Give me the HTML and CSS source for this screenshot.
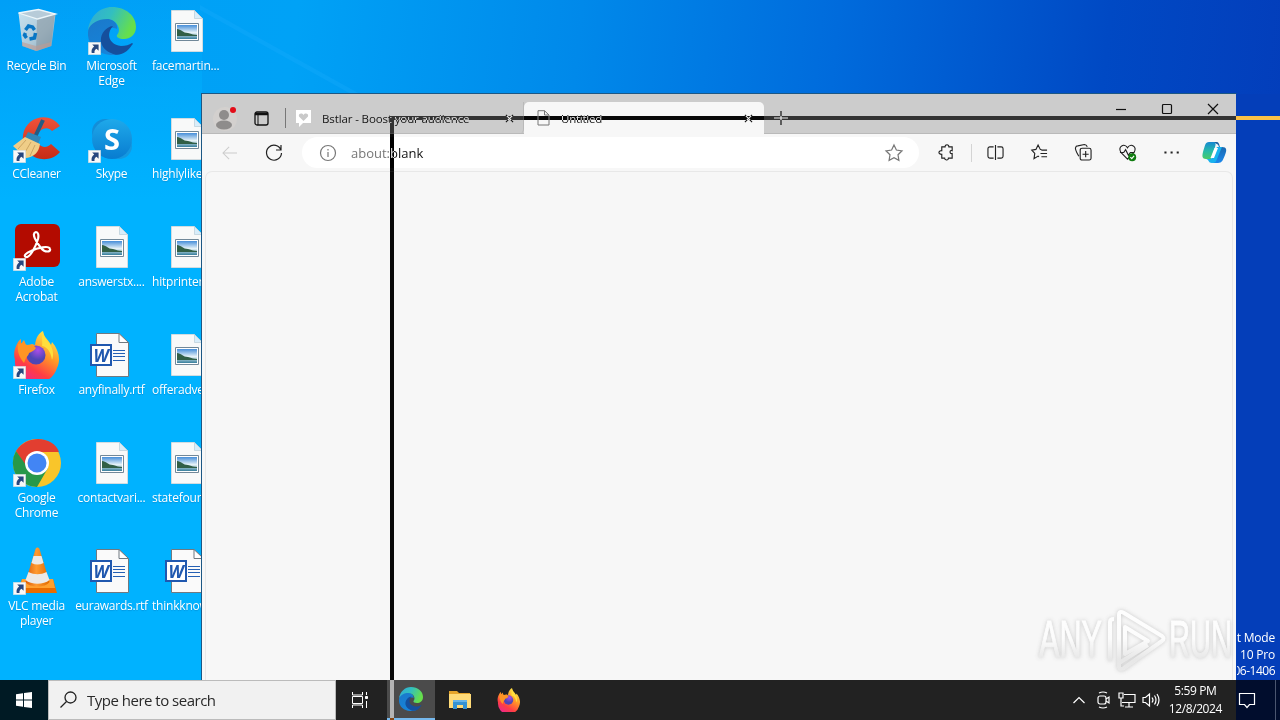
FILE: index.html
```
<!DOCTYPE html>
<html lang="en">
<head>
<meta charset="utf-8">
<title>Desktop</title>
<link rel="stylesheet" href="styles.css">
</head>
<body>
<svg class="defs" width="0" height="0" aria-hidden="true">
  <defs>
    <linearGradient id="edgeTop" x1="0" y1="0" x2="1" y2=".35"><stop offset="0" stop-color="#31a9d8"/><stop offset=".5" stop-color="#32bfc0"/><stop offset="1" stop-color="#66df4b"/></linearGradient>
    <linearGradient id="edgeMid" x1="0" y1="0" x2=".4" y2="1"><stop offset="0" stop-color="#1b78c9"/><stop offset="1" stop-color="#1684da"/></linearGradient>
    <linearGradient id="foxBody" x1=".8" y1="0" x2=".25" y2="1"><stop offset="0" stop-color="#fff14f"/><stop offset=".4" stop-color="#ff9827"/><stop offset=".72" stop-color="#ff3d45"/><stop offset="1" stop-color="#ea2594"/></linearGradient>
    <radialGradient id="foxCore" cx=".6" cy=".25"><stop offset="0" stop-color="#ac4de8"/><stop offset="1" stop-color="#4f46b5"/></radialGradient>
    <linearGradient id="skyBlue" x1="0" y1="0" x2="0" y2="1"><stop offset="0" stop-color="#1fa9ea"/><stop offset="1" stop-color="#087cd0"/></linearGradient>
    <linearGradient id="photo" x1="0" y1="0" x2="0" y2="1"><stop offset="0" stop-color="#468ed9"/><stop offset=".55" stop-color="#e9f4f8"/><stop offset="1" stop-color="#347d9b"/></linearGradient>
    <linearGradient id="cone" x1="0" y1="0" x2="1" y2="0"><stop offset="0" stop-color="#d95a08"/><stop offset=".45" stop-color="#ff9a30"/><stop offset="1" stop-color="#e06a00"/></linearGradient>
    <linearGradient id="copA" x1="0" y1="0" x2="0" y2="1"><stop offset="0" stop-color="#1688d1"/><stop offset=".55" stop-color="#28bca7"/><stop offset="1" stop-color="#49cb68"/></linearGradient>
    <linearGradient id="copB" x1="0" y1="0" x2="0" y2="1"><stop offset="0" stop-color="#1b5f9d"/><stop offset="1" stop-color="#1b88ed"/></linearGradient>
    <linearGradient id="bin" x1="0" y1="0" x2="1" y2="1"><stop offset="0" stop-color="#dce8ee"/><stop offset=".6" stop-color="#bfcbd3"/><stop offset="1" stop-color="#8fa0ad"/></linearGradient>
    <linearGradient id="ccRed" x1="0" y1="0" x2="0" y2="1"><stop offset="0" stop-color="#f0523a"/><stop offset="1" stop-color="#c52b16"/></linearGradient>
    <linearGradient id="markFill" x1="0" y1="0" x2="0" y2="68" gradientUnits="userSpaceOnUse"><stop offset="0" stop-color="#fff"/><stop offset=".45" stop-color="#fdfdfd"/><stop offset=".75" stop-color="#e6e6e6"/><stop offset="1" stop-color="#e9e9e9"/></linearGradient>
    <symbol id="shortcut" viewBox="0 0 13 13"><path fill="#f8f8f8" stroke="#cfd6dc" stroke-width=".6" d="M.3.3h12.400v12.400H.3z"/><path fill="#27477f" d="M4.200 2.400h6.400v6.300L8.500 6.800c-1.700 1-2.200 2.200-2 4.200H3.700c-.6-3 .3-5 2.500-6.500z"/></symbol>
    <symbol id="edge" viewBox="0 0 48 48"><path fill="url(#edgeMid)" d="M0 25C1 12 11 10 18 11c8 1 12 6 11 11-1-1-3-1-5-1-8 1-9 11-3 18 4 5 9 8 14 7-5 2-9 2-13 2C9 47-1 38 0 25Z"/><path fill="#154f9d" d="M13 35c-1-7 4-15 12-16-8 9-3 19 8 20 5 0 8-1 11-3 1 0 1 1 0 2C38 47 30 50 23 46c-5-2-9-6-10-11Z"/><path fill="url(#edgeTop)" d="M0 23C2 9 12 0 24 0c14 0 24 9 24 20 0 8-6 12-12 12-5 0-8-2-7-4 5-5 0-16-10-16C10 12 3 16 0 23Z"/></symbol>
    <symbol id="firefox" viewBox="0 0 48 48"><path fill="url(#foxBody)" d="M4 13c1-2 2-4 4-5v5l3-4 2 5c2 0 4 0 6-1l3 1c1-8 4-12 8-14 1 7 6 9 8 14l1-3c7 8 9 18 5 26A21.500 21.500 0 0 1 2 29C0 22 2 17 4 13Z"/><circle cx="23" cy="24" r="9.500" fill="url(#foxCore)"/><path fill="#ff9524" d="M5 13c4-1 6-1 9 1 5-1 7 0 9 3-2 3-5 4-7 5 0 2-2 3-3 5l-2 5C6 26 4 20 5 13Z"/><path fill="#ffdf3c" d="M30 1c1 7 6 9 8 14 2 4 3 9 1 14-1-7-4-13-10-14 1-4-1-8 1-14Z"/></symbol>
    <symbol id="photoFile" viewBox="0 0 32 42"><path fill="#f8f9f9" stroke="#d1dce1" d="M.5.5h23l8 8v33H.500z"/><path fill="#d8edfa" stroke="#b9ccd7" stroke-width=".7" d="M23.500.5v8h8z"/><path fill="#fff" stroke="#718899" d="M4.500 13.500h23v17h-23z"/><path fill="url(#photo)" d="M6 15h20v14H6z"/><path fill="#315f46" d="M6 19c4 0 6 4 11 4 4 1 6 2 9 2v1H6z"/></symbol>
    <symbol id="wordFile" viewBox="0 0 40 44"><path fill="#fafafa" stroke="#707980" d="M6.500.5H29l9.500 9v34h-32z"/><path fill="#fff" stroke="#707980" d="M29 .5v9h9.500z"/><path stroke="#2560b4" stroke-width="1.200" d="M23 17.500h12M23 20.500h12M23 23.500h12M23 27.500h12"/><path fill="#fff" stroke="#2058af" stroke-width="2" d="M1 12h20v20H1z"/><text x="11" y="28.500" text-anchor="middle" class="word-letter">W</text></symbol>
  </defs>
</svg>
<main class="desktop">
  <svg class="wallpaper" width="1280" height="720" viewBox="0 0 1280 720"><path fill="#23b0ff" opacity=".22" d="M200 5l160 89h-9L200 10z"/></svg>
  <div class="icons">
    <div class="icon"><svg class="art" viewBox="0 0 48 48"><path fill="url(#bin)" d="M5.500 6l4 33 14 5 15-5 4-32-18 4z" opacity=".9"/><path fill="#8997a2" d="M24 12l-1 32 15-5 4-32z" opacity=".6"/><path fill="#b7cbd8" stroke="#edf6fa" stroke-width="1.300" d="M5.500 6l20-3.500 17 4.500-18 5z"/><path fill="#bf9b91" opacity=".6" d="M9 35l14 4 15-4v4l-15 5-14-5z"/><path fill="none" stroke="#0876c4" stroke-width="3.500" d="M12.500 23l3-4 4 1 2 3M22.500 26l-1 5-5 1M13.500 31l-2-3 1-2"/></svg><span class="label">Recycle Bin</span></div>
    <div class="icon"><svg class="art"><use href="#edge"/></svg><svg class="arrow"><use href="#shortcut"/></svg><span class="label">Microsoft<br>Edge</span></div>
    <div class="icon"><svg class="file"><use href="#photoFile"/></svg><span class="label left">facemartin...</span></div>
    <div class="icon"><svg class="art" viewBox="0 0 48 48"><path fill="url(#ccRed)" d="M47 11C37-4 13 1 10 20c-3 22 24 32 37 17l-9-8c-6 6-14 2-14-6s10-13 15-7z"/><path stroke="#245c84" stroke-width="4" d="M30 5L22 22"/><path fill="#3287b7" d="M15 17l13 5-3 7-13-6z"/><path fill="#efcd87" d="M12 22l15 7c-1 8-6 13-14 14L0 31z"/><path stroke="#c19b59" stroke-width=".8" d="M13 25L5 34M18 27l-7 12M22 30l-5 11"/></svg><svg class="arrow"><use href="#shortcut"/></svg><span class="label">CCleaner</span></div>
    <div class="icon"><svg class="art" viewBox="0 0 48 48"><circle cx="17" cy="17" r="13" fill="#138ed8"/><circle cx="31" cy="31" r="13" fill="#1598df"/><circle cx="24" cy="24" r="20" fill="url(#skyBlue)"/><text x="24" y="34.500" text-anchor="middle" class="skype-letter">S</text></svg><svg class="arrow"><use href="#shortcut"/></svg><span class="label">Skype</span></div>
    <div class="icon"><svg class="file"><use href="#photoFile"/></svg><span class="label left">highlylike...</span></div>
    <div class="icon"><svg class="art" viewBox="0 0 48 48"><rect x="2" y="1" width="45" height="43" rx="6" fill="#b30b00"/><path fill="none" stroke="#fff" stroke-width="2.200" d="M23 9c-5 1 0 10 5 16 4 5 10 4 9 1-1-4-13-1-19 2-5 2-8 5-5 6 4 1 10-11 12-18 1-4 0-7-2-7Z"/></svg><svg class="arrow"><use href="#shortcut"/></svg><span class="label">Adobe<br>Acrobat</span></div>
    <div class="icon"><svg class="file"><use href="#photoFile"/></svg><span class="label">answerstx....</span></div>
    <div class="icon"><svg class="file"><use href="#photoFile"/></svg><span class="label left">hitprinter...</span></div>
    <div class="icon"><svg class="art"><use href="#firefox"/></svg><svg class="arrow"><use href="#shortcut"/></svg><span class="label">Firefox</span></div>
    <div class="icon"><svg class="word"><use href="#wordFile"/></svg><span class="label">anyfinally.rtf</span></div>
    <div class="icon"><svg class="file"><use href="#photoFile"/></svg><span class="label left">offeradve...</span></div>
    <div class="icon"><svg class="art" viewBox="0 0 48 48"><circle cx="24" cy="24" r="24" fill="#f9c52a"/><path fill="#e23e30" d="M3 12C15-6 41-2 46 13H24L14 30z"/><path fill="#279849" d="M3 12a24 24 0 0 0 21 36l11-19-20 0z"/><circle cx="24" cy="24" r="12" fill="#fff"/><circle cx="24" cy="24" r="9.500" fill="#4285f4"/></svg><svg class="arrow"><use href="#shortcut"/></svg><span class="label">Google<br>Chrome</span></div>
    <div class="icon"><svg class="file"><use href="#photoFile"/></svg><span class="label">contactvari...</span></div>
    <div class="icon"><svg class="file"><use href="#photoFile"/></svg><span class="label left">statefour...</span></div>
    <div class="icon"><svg class="art" viewBox="0 0 48 48"><path fill="#e96c00" d="M9 32h31l4 14H4z"/><path fill="#ffa02e" d="M9 32h31l2 9H7z"/><path fill="url(#cone)" d="M22.500 2c1-2 3-2 4 0l10 33c-4 6-20 6-24 0z"/><path fill="#ece9e6" d="M20.500 9h8l2 7c-4 2-8 2-12 0zM15.500 25c6 3 12 3 18 0l3 8c-6 5-18 5-24 0z"/></svg><svg class="arrow"><use href="#shortcut"/></svg><span class="label">VLC media<br>player</span></div>
    <div class="icon"><svg class="word"><use href="#wordFile"/></svg><span class="label">eurawards.rtf</span></div>
    <div class="icon"><svg class="word"><use href="#wordFile"/></svg><span class="label left">thinkknow...</span></div>
  </div>
  <div class="system-mark"><span>t Mode</span><span>s 10 Pro</span><span>06-1406</span></div>

  <section class="window">
    <header class="tabs">
      <svg class="avatar" viewBox="0 0 26 26"><circle cx="13" cy="14" r="12" fill="#d3d0ce"/><circle cx="12" cy="10" r="5" fill="#8e8c8b"/><ellipse cx="12" cy="20" rx="8" ry="4.500" fill="#8e8c8b"/><circle cx="21" cy="5" r="3" fill="#e30c18"/></svg>
      <svg class="tab-menu" viewBox="0 0 15 15"><rect x="1" y="1" width="13" height="13" rx="2" fill="none" stroke="#111" stroke-width="1.300"/><path stroke="#111" stroke-width="2.500" d="M1 3h13"/><path stroke="#111" d="M4 4v10"/></svg>
      <i class="tab-rule"></i>
      <div class="tab first"><svg class="heart" viewBox="0 0 17 17"><path fill="#fff" d="M1 0h15v13H8l-4 4v-4H1z"/><path fill="#c9c9c9" d="M8.500 11L4 6.500c-1-3 3-4 4.500-1.500C10 2.500 14 3.500 13 6.500z"/></svg><span>Bstlar - Boost your audience</span><svg class="close" viewBox="0 0 10 10"><path d="M1 1l8 8M9 1L1 9"/></svg></div>
      <div class="tab active"><svg class="page-icon" viewBox="0 0 13 16"><path d="M1 .7h6.500L12 5v10H1zM7.500.7V5H12"/></svg><span>Untitled</span><svg class="close" viewBox="0 0 10 10"><path d="M1 1l8 8M9 1L1 9"/></svg></div>
      <svg class="new-tab" viewBox="0 0 14 14"><path d="M0 7h14M7 0v14"/></svg>
      <div class="window-buttons"><svg viewBox="0 0 12 12"><path d="M1 6.500h10"/></svg><svg viewBox="0 0 12 12"><rect x="1.500" y="1.500" width="9" height="9" rx="1"/></svg><svg viewBox="0 0 12 12"><path d="M1 1l10 10M11 1L1 11"/></svg></div>
    </header>
    <div class="toolbar">
      <svg class="back" viewBox="0 0 18 16"><path d="M17 8H1M8 1L1 8l7 7"/></svg>
      <svg class="reload" viewBox="0 0 18 18"><path d="M16 6A7.500 7.500 0 1 0 16.500 9M16 1v5h-5"/></svg>
      <div class="address"><svg class="info" viewBox="0 0 18 18"><circle cx="9" cy="9" r="7.500"/><path d="M9 8v5M9 5v1.500"/></svg><span><em>about:</em>blank</span><svg class="star" viewBox="0 0 18 18"><path d="M9 1l2.400 5 5.600.8-4 3.900.9 5.600L9 13.700l-4.900 2.600.9-5.600-4-3.900L6.600 6z"/></svg></div>
      <div class="tools">
        <svg viewBox="0 0 18 18"><path d="M5 3h2.500c0-3 4-3 4 0H15v4c-3-1-3 4 0 3v5h-4c0 3-4 2-4 0H4v-4c-4 0-4-4 0-4V3z"/></svg>
        <i></i>
        <svg viewBox="0 0 18 18"><path d="M7 3H3a2 2 0 0 0-2 2v8q0 2 2 2h4M11 3h4q2 0 2 2v8q0 2-2 2h-4M9 1v16"/></svg>
        <svg viewBox="0 0 18 18"><path d="M11 6l-1.200-.3L7.500 1 5.200 5.700.8 6.500 4 10l-.8 5.500 4.300-2.700 1 .6M11 6.500h6M10 10h7M11 13.500h6"/></svg>
        <svg viewBox="0 0 18 18"><path d="M4 13C3 11 0 6 .5 4Q1 2 3 2l7-1.500Q12 .5 13 3M5.500 6.500q0-2 2-2H15q2 0 2 2V15q0 2-2 2H7.500q-2 0-2-2zM11.300 7.500v6.500M8 10.800h6.500"/></svg>
        <svg viewBox="0 0 18 18"><path d="M9 16L2 9C-2 2 6-1 9 4c3-5 11-2 7 5zM1 9h4l2-3 3 6 2-3h4"/><circle cx="14" cy="14" r="4.200" fill="#107c10" stroke="none"/><path stroke="#fff" d="M12 14l1.500 1.500 2.500-3"/></svg>
        <svg viewBox="0 0 18 18"><path class="dots" d="M1.500 9h2.200M8 9h2.200M14.500 9h2.200"/></svg>
        <svg class="copilot" viewBox="0 0 24 24"><path fill="url(#copB)" d="M8 1h6c3 0 3 2 4 5h2c5 0 5 3 3 8s-3 8-7 8h-6c3-1 3-3 4-6l3-9c0-4-3-5-9-6z"/><path fill="url(#copA)" d="M7 1h4c3 0 3 2 2 5L9 18H4c-4 0-4-3-3-7 2-6 2-10 6-10z"/><path fill="#18b2ee" d="M4 18h5l6-12h5l-5 12c-1 3-2 4-5 4-4 0-3-4-6-4z"/><path fill="#fff" d="M12.500 7h3.500l-4 10H8.500z"/></svg>
      </div>
    </div>
    <div class="page"></div>
  </section>

  <svg class="watermark" width="200" height="68" viewBox="0 0 200 68"><g><text x="2" y="49" textLength="63" lengthAdjust="spacingAndGlyphs">ANY</text><path d="M73 53V14q0-3 4-3M82 60V7q0-5 5-2l38 23q3 3 0 5L87 60q-5 3-5-2M88 46V19l23 14zM82 55l29-18"/><text x="132" y="49" textLength="63" lengthAdjust="spacingAndGlyphs">RUN</text></g></svg>

  <footer class="taskbar">
    <div class="start"><svg width="16" height="16" viewBox="0 0 16 16"><path fill="#fff" d="M0 2.300L7 1.200v6.300H0zM8 1l8-1v7.500H8zM0 8.500h7v6.300l-7-1zM8 8.500h8V16l-8-1z"/></svg></div>
    <div class="search"><svg width="18" height="18" viewBox="0 0 18 18"><circle cx="10.500" cy="6.500" r="5.500"/><path d="M6.500 10.500l-6 6"/></svg><span>Type here to search</span></div>
    <div class="task view"><svg width="18" height="18" viewBox="0 0 18 18"><path d="M1.500 1v3h10V1M1.500 17v-3h10v3M1.500 5.500h10v7h-10zM15.500 1v3M15.500 10v7"/><path fill="#fff" d="M14.500 5.500h2v2h-2z"/></svg></div>
    <div class="task selected"><svg width="24" height="24"><use href="#edge"/></svg></div>
    <div class="task"><svg width="22" height="20" viewBox="0 0 22 20"><path fill="#e6a52b" d="M0 1h8l2 2h11v5H0z"/><path fill="#ffdb78" d="M0 4h22v14H0z"/><path fill="#3492d2" d="M4 10h14v9h-4v-4H8v4H4z"/><path fill="#66b4e8" d="M4 10h14v2H4z"/></svg></div>
    <div class="task"><svg width="24" height="24"><use href="#firefox"/></svg></div>
    <div class="tray">
      <svg viewBox="0 0 18 18"><path d="M3.500 12L9 6.500l5.500 5.500"/></svg>
      <svg viewBox="0 0 18 18"><rect x="4" y="5" width="8" height="8" rx="2"/><path d="M12 8l3-2v6l-3-2M5 2q4-2 8 0M5 16q4 2 8 0"/></svg>
      <svg viewBox="0 0 18 18"><path d="M6 3.500h11v8H4M11 11.500V16M7 16h8M1 2h4v5H1zM3 7v8h3"/></svg>
      <svg viewBox="0 0 18 18"><path d="M1 6.500h2.500L7.500 3v12l-4-3.500H1zM10 6.500q2 2.500 0 5M12.500 4.500q3 4.500 0 9M15 3q4 6 0 12"/></svg>
      <div class="clock"><span>5:59 PM</span><span>12/8/2024</span></div>
    </div>
    <div class="notice"><svg width="18" height="18" viewBox="0 0 18 18"><path d="M1.500 2.500h15v11h-5l-2.500 3-2.500-3h-5z"/></svg></div>
  </footer>
  <i class="drag-line across"></i><i class="drag-line down"></i>
</main>
</body>
</html>
```
FILE: styles.css
```
* { box-sizing: border-box; }
body { margin: 0; overflow: hidden; font-family: "Open Sans", "Noto Sans", sans-serif; }
svg { display: block; flex: none; overflow: visible; }
.defs { position: absolute; }
.desktop { position: relative; width: 1280px; height: 720px; overflow: hidden; isolation: isolate; background: linear-gradient(90deg, transparent 0 1236px, #043eb9 1236px) 0 94px no-repeat, linear-gradient(90deg, #00b2ff 0 202px, transparent 202px) 0 200px no-repeat, linear-gradient(180deg, #00a4fb00 0, #00b2ff 200px) 0 0 / 202px 200px no-repeat, linear-gradient(96deg, #009ff7 0, #00a2f6 22%, #0089ea 43%, #006bdc 62%, #0049c4 82%, #043ab8 100%); }
.wallpaper { position: absolute; inset: 0; }
.icons { position: relative; display: grid; width: 225px; margin-left: -1px; grid-template-columns: repeat(3, 75px); grid-auto-rows: 108px; }
.icon { position: relative; display: flex; flex-direction: column; align-items: center; padding-top: 7px; }
.art { width: 48px; height: 48px; }
.file { width: 32px; height: 42px; margin: 3px 0; }
.word { width: 40px; height: 44px; margin: 2px 4px 2px 0; }
.arrow { position: absolute; left: 14px; top: 42px; width: 13px; height: 13px; }
.label { margin-top: 3px; color: #fff; font-size: 12px; line-height: 15px; letter-spacing: -.25px; text-align: center; white-space: nowrap; text-shadow: 0 1px 1px #0057904d; }
.label.left { align-self: flex-start; margin-left: 3px; letter-spacing: -.2px; }
.word-letter { font: italic bold 17px "Open Sans", sans-serif; fill: #2058af; }
.skype-letter { font: bold 29px "Open Sans", sans-serif; fill: #fff; }
.system-mark { position: absolute; right: 5px; top: 630px; display: flex; flex-direction: column; align-items: flex-end; color: #fff; font-size: 12px; line-height: 16.600px; letter-spacing: -.2px; white-space: nowrap; }
.system-mark span:last-child { letter-spacing: -.5px; }
.window { position: absolute; left: 201px; top: 93px; width: 1036px; height: 587px; display: flex; flex-direction: column; padding: 0 3px; background: #f7f7f7; border: 1px solid #1c5784; border-bottom: 0; border-right-color: #043eb9; }
.tabs { display: flex; height: 40px; margin: 0 -3px; padding-left: 10px; background: #ccc; border-bottom: 1px solid #b9b9b9; }
.avatar { width: 26px; height: 26px; margin-top: 11px; }
.tab-menu { width: 15px; height: 15px; margin: 17px 0 0 16px; }
.tab-rule { width: 1px; height: 20px; margin: 14px 0 0 16px; background: #777; }
.tab { display: flex; align-items: center; height: 32px; margin-top: 8px; font-size: 11.500px; letter-spacing: -.25px; white-space: nowrap; color: #151515; }
.tab.first { width: 238px; padding: 0 9px 0 9px; border-right: 1px solid #b9b9b9; border-bottom-right-radius: 5px; letter-spacing: -.12px; }
.tab.active { width: 240px; padding: 0 11px 0 13px; background: #f7f7f7; border-radius: 5px 5px 0 0; }
.tab .close { width: 9px; height: 9px; margin-left: auto; }
.close path, .new-tab path, .window-buttons path, .window-buttons rect { fill: none; stroke: #111; stroke-width: 1.200; }
.heart { width: 17px; height: 17px; margin-right: 10px; }
.page-icon { width: 13px; height: 16px; margin-right: 11px; fill: none; stroke: #777; }
.new-tab { width: 14px; height: 14px; margin: 17px 0 0 10px; }
.window-buttons { display: flex; gap: 34px; margin: 9px 17px 0 auto; }
.window-buttons svg { width: 12px; height: 12px; }
.toolbar { display: flex; align-items: center; height: 37px; }
.toolbar svg { fill: none; stroke: #222; stroke-width: 1.200; }
.toolbar .back { width: 16px; height: 14px; margin-left: 17px; stroke: #ccc; }
.reload { width: 18px; height: 18px; margin-left: 27px; }
.address { display: flex; align-items: center; width: 617px; height: 31px; margin-left: 19px; padding: 0 16px 0 17px; border-radius: 16px; background: #fff; font-size: 13px; letter-spacing: 0; color: #111; }
.address em { font-style: normal; color: #777; }
.address .info { width: 18px; height: 18px; margin-right: 14px; stroke: #777; }
.address .star { width: 18px; height: 18px; margin-left: auto; stroke: #777; }
.tools { position: relative; display: flex; align-items: center; gap: 27px; margin-left: 19px; }
.tools svg { width: 17px; height: 17px; }
.tools i { width: 1px; height: 18px; margin: 0 -12px 0 -11px; background: #d4d4d4; }
.tools .copilot { width: 24px; height: 24px; margin-left: -5px; stroke: none; }
.tools .dots { stroke-width: 2.300; }
.page { flex: 1; border: 1px solid #e8e8e8; border-bottom: 0; border-radius: 7px 7px 0 0; background: #f7f7f7; }
.watermark { position: absolute; left: 1037px; top: 608px; opacity: .9; filter: drop-shadow(0 0 2px #aaaa); }
.watermark text { font: 51px "Liberation Sans", sans-serif; fill: url(#markFill); stroke: url(#markFill); stroke-width: 1; }
.watermark path { fill: none; stroke: url(#markFill); stroke-width: 4; stroke-linejoin: round; }
.taskbar { position: absolute; left: 0; right: 0; bottom: 0; display: flex; height: 40px; background: #222; color: #fff; }
.start { display: flex; align-items: center; justify-content: center; width: 48px; background: #001a24; }
.search { display: flex; align-items: center; width: 288px; padding-left: 11px; border: 1px solid #bbb; background: #f1f1f1; color: #292929; font-size: 15px; letter-spacing: -.5px; }
.search svg { margin-right: 9px; fill: none; stroke: #222; stroke-width: 1.300; }
.task { display: flex; justify-content: center; align-items: center; width: 49px; }
.task.view { width: 51px; padding-right: 3px; }
.task.view svg { fill: none; stroke: #fff; stroke-width: 1; }
.task.selected { width: 48px; background: #4b4b4b; border-bottom: 2px solid #76b9ed; }
.tray { display: flex; align-items: center; gap: 6px; margin-left: auto; margin-right: 14px; }
.tray svg, .notice svg { width: 18px; height: 18px; fill: none; stroke: #fff; stroke-width: 1.200; }
.clock { display: flex; flex-direction: column; align-items: center; margin-left: 3px; font-size: 12px; line-height: 18px; letter-spacing: -.4px; }
.notice { display: flex; align-items: center; width: 44px; padding-left: 2px; background: #010d2d; box-shadow: inset -4px 0 #010d2d, inset -5px 0 #4b5670; }
.drag-line { position: absolute; background: #fff; mix-blend-mode: difference; }
.across { left: 390px; right: 0; top: 116px; height: 4px; }
.down { left: 390px; top: 120px; bottom: 0; width: 4px; }
```
